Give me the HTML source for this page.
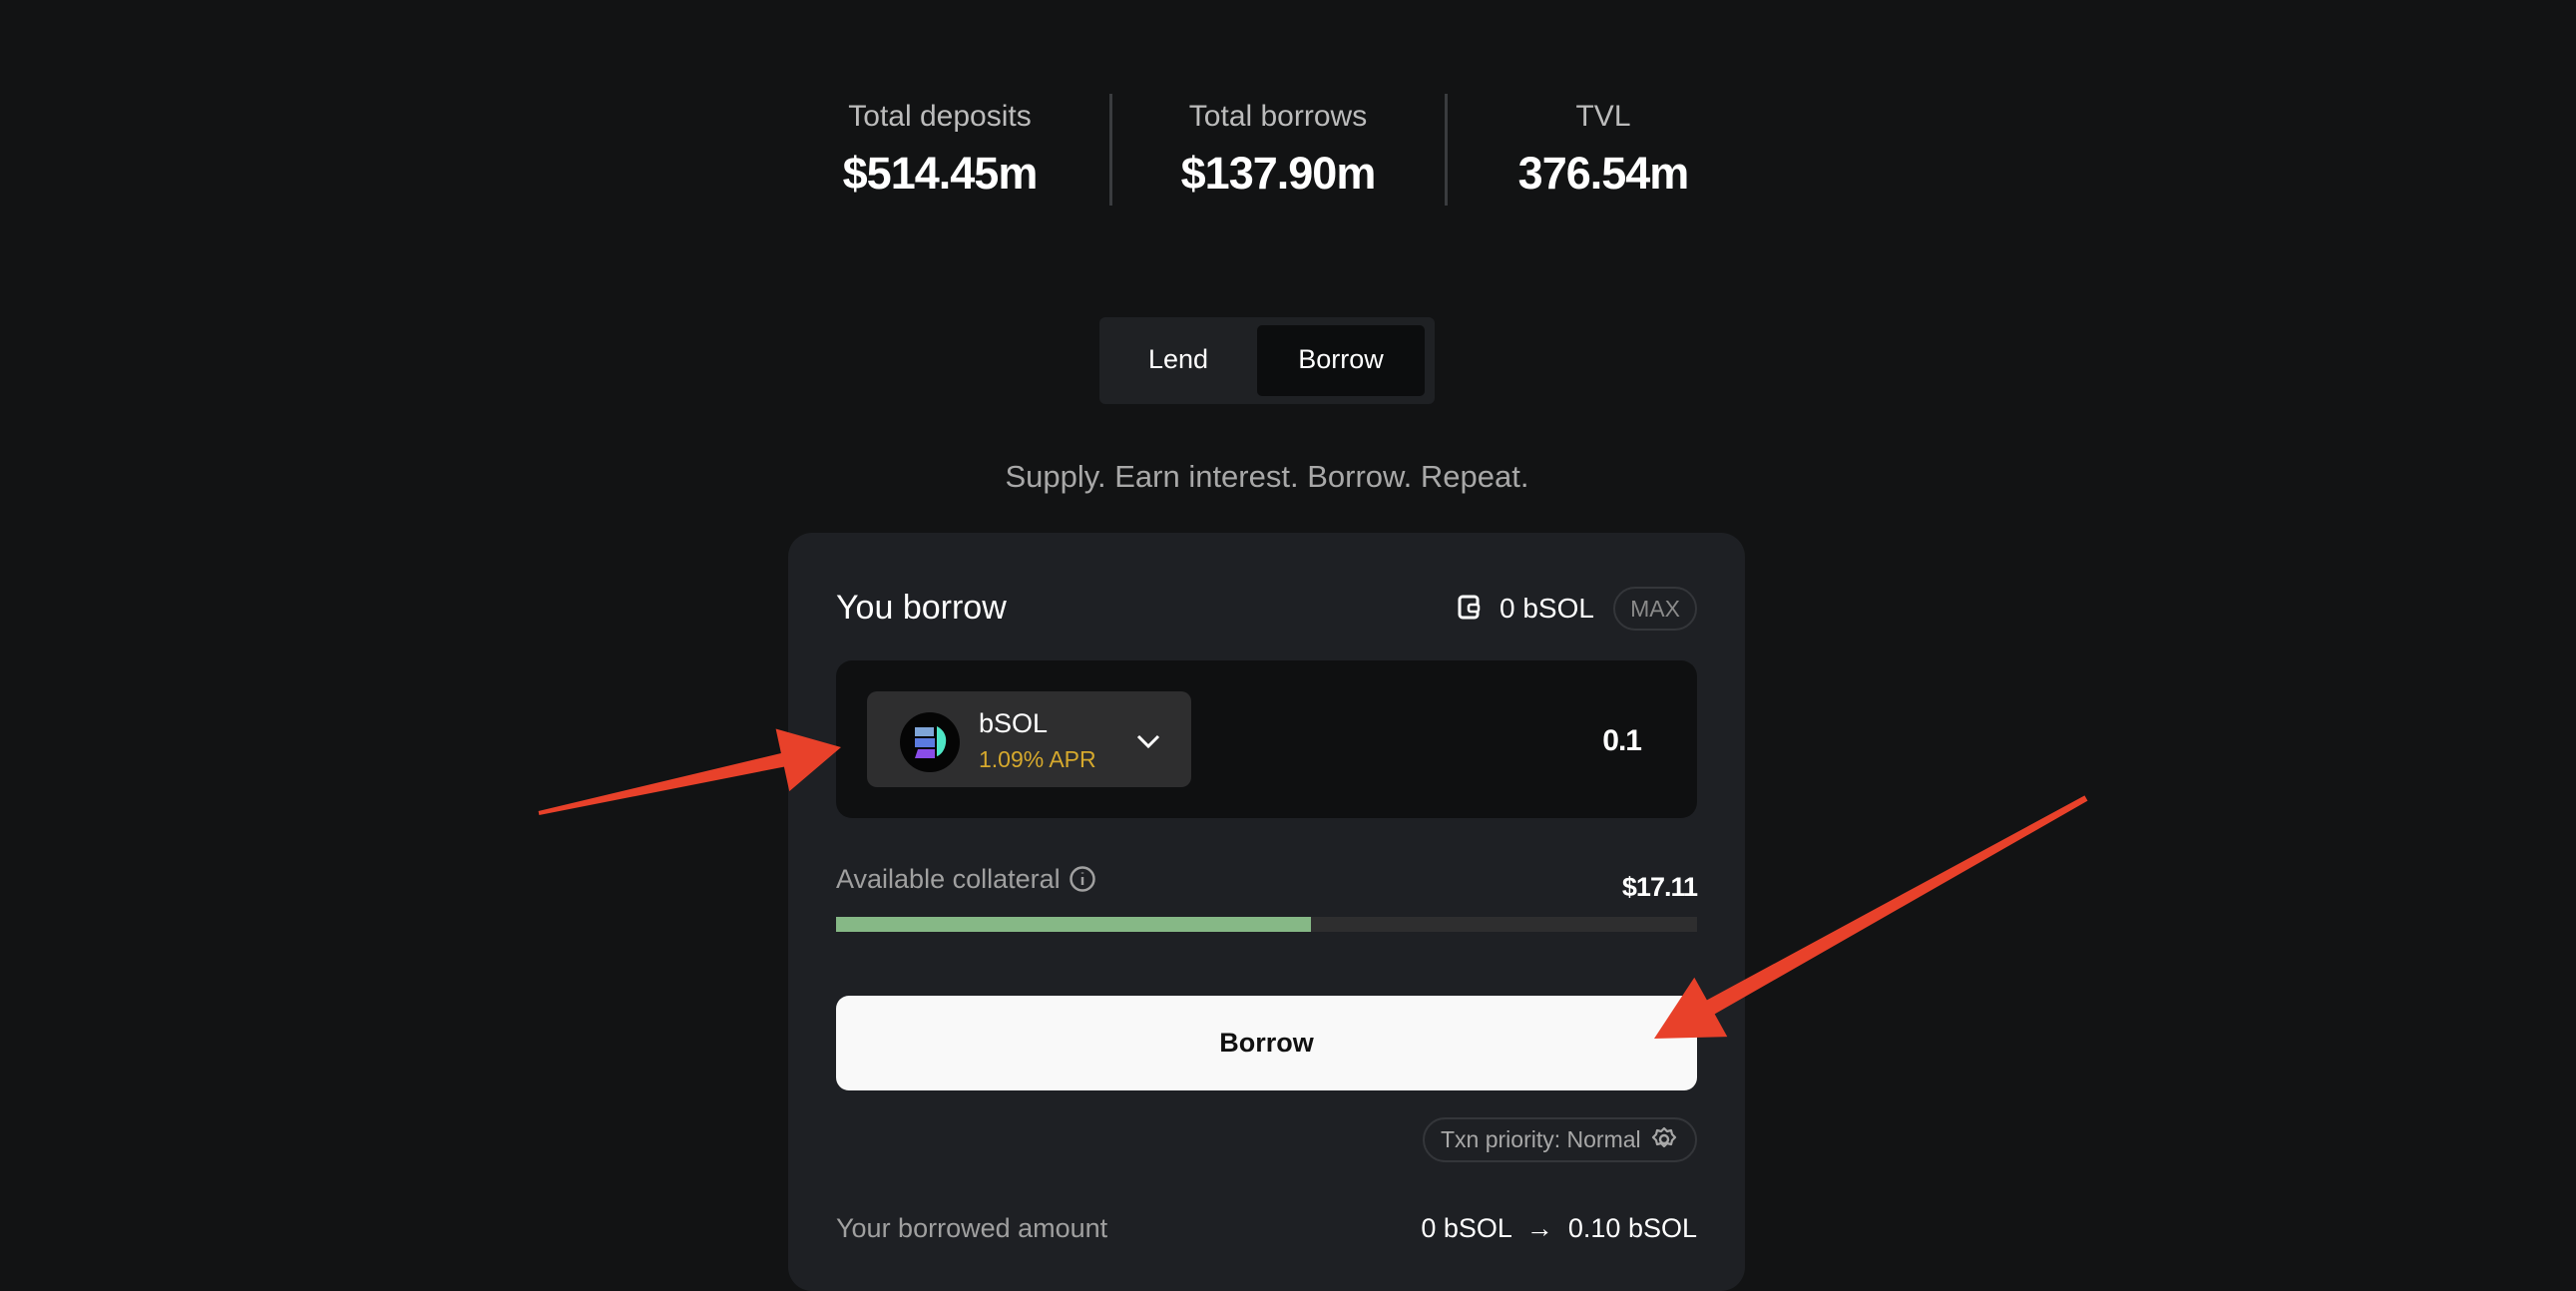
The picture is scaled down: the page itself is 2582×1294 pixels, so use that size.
<!DOCTYPE html>
<html><head><meta charset="utf-8"><style>
*{margin:0;padding:0;box-sizing:border-box}
body{width:2582px;height:1248px;background:#121314;font-family:"Liberation Sans",sans-serif;color:#fff;position:relative;overflow:hidden}
.a{position:absolute;white-space:nowrap}
.lbl{font-size:30px;color:#bcbcbc;transform:translateX(-50%)}
.val{font-size:45px;font-weight:700;transform:translateX(-50%);letter-spacing:-1px}
.div{position:absolute;width:3px;background:#3a3c3f;top:94px;height:112px}
</style></head><body>
<div class="a lbl" style="left:942px;top:100px">Total deposits</div>
<div class="a val" style="left:942px;top:148px">$514.45m</div>
<div class="div" style="left:1112px"></div>
<div class="a lbl" style="left:1281px;top:100px">Total borrows</div>
<div class="a val" style="left:1281px;top:148px">$137.90m</div>
<div class="div" style="left:1448px"></div>
<div class="a lbl" style="left:1607px;top:100px">TVL</div>
<div class="a val" style="left:1607px;top:148px">376.54m</div>

<div class="a" style="left:1102px;top:318px;width:336px;height:87px;background:#1f2124;border-radius:6px"></div>
<div class="a" style="left:1260px;top:326px;width:168px;height:71px;background:#0c0d0e;border-radius:5px"></div>
<div class="a" style="left:1181px;top:345px;font-size:27px;transform:translateX(-50%)">Lend</div>
<div class="a" style="left:1344px;top:345px;font-size:27px;transform:translateX(-50%)">Borrow</div>

<div class="a" style="left:1270px;top:460px;font-size:31px;color:#a8a8a8;transform:translateX(-50%)">Supply. Earn interest. Borrow. Repeat.</div>

<div class="a" style="left:790px;top:534px;width:959px;height:760px;background:#1e2024;border-radius:24px"></div>
<div class="a" style="left:838px;top:590px;font-size:34px">You borrow</div>
<svg class="a" style="left:1460px;top:594px" width="26" height="28" viewBox="0 0 26 28"><rect x="3" y="4" width="18" height="21" rx="3" fill="none" stroke="#fff" stroke-width="3"/><rect x="12" y="12" width="10" height="7" rx="2" fill="#1e2024" stroke="#fff" stroke-width="2.5"/></svg>
<div class="a" style="left:1503px;top:594px;font-size:28px">0 bSOL</div>
<div class="a" style="left:1617px;top:588px;width:84px;height:44px;border:2px solid #34363a;border-radius:22px;font-size:23px;color:#8a8a8a;text-align:center;line-height:40px">MAX</div>

<div class="a" style="left:838px;top:662px;width:863px;height:158px;background:#0f1011;border-radius:16px"></div>
<div class="a" style="left:869px;top:693px;width:325px;height:96px;background:#2e2e2f;border-radius:10px"></div>
<svg class="a" style="left:901px;top:713px" width="62" height="62" viewBox="0 0 62 62"><circle cx="31" cy="31" r="30" fill="#050505"/><path d="M16 16h19v9H16z" fill="#7fa5d8"/><path d="M16 27h20v9H16z" fill="#5b7be0"/><path d="M19 38h17v9H16z" fill="#8a4de8"/><path d="M38 15c8 4 10 11 9 17-1 7-5 12-9 13z" fill="#4ee6c6"/></svg>
<div class="a" style="left:981px;top:710px;font-size:27px">bSOL</div>
<div class="a" style="left:981px;top:748px;font-size:23px;color:#d6a92d">1.09% APR</div>
<svg class="a" style="left:1138px;top:734px" width="26" height="18" viewBox="0 0 26 18"><path d="M3 4l10 10 10-10" fill="none" stroke="#fff" stroke-width="3"/></svg>
<div class="a" style="left:1645px;top:726px;font-size:30px;font-weight:700;transform:translateX(-100%);letter-spacing:-1px">0.1</div>

<div class="a" style="left:838px;top:866px;font-size:27px;color:#a0a0a0">Available collateral</div>
<svg class="a" style="left:1071px;top:867px" width="28" height="28" viewBox="0 0 28 28"><circle cx="14" cy="14" r="11.5" fill="none" stroke="#a0a0a0" stroke-width="2.5"/><path d="M14 12v8M14 7.5v1" stroke="#a0a0a0" stroke-width="2.5"/></svg>
<div class="a" style="left:1701px;top:874px;font-size:27px;font-weight:700;transform:translateX(-100%);letter-spacing:-1px">$17.11</div>
<div class="a" style="left:838px;top:919px;width:863px;height:15px;background:#2e2e2f"></div>
<div class="a" style="left:838px;top:919px;width:476px;height:15px;background:#86b886"></div>

<div class="a" style="left:838px;top:998px;width:863px;height:95px;background:#f9f9f9;border-radius:13px;color:#111;font-size:27px;font-weight:700;text-align:center;line-height:95px">Borrow</div>

<div class="a" style="left:1426px;top:1120px;width:275px;height:45px;border:2px solid #34363a;border-radius:23px"></div>
<div class="a" style="left:1444px;top:1129px;font-size:23px;color:#a8a8a8">Txn priority: Normal</div>
<svg class="a" style="left:1654px;top:1128px" width="28" height="28" viewBox="0 0 28 28"><circle cx="14" cy="14" r="4" fill="none" stroke="#a8a8a8" stroke-width="2.4"/><path d="M14 3l3 3 4-1 1 4 3 3-3 3-1 4-4-1-3 3-3-3-4 1-1-4-3-3 3-3 1-4 4 1z" fill="none" stroke="#a8a8a8" stroke-width="2.2" stroke-linejoin="round"/></svg>

<div class="a" style="left:838px;top:1216px;font-size:27px;color:#a0a0a0">Your borrowed amount</div>
<div class="a" style="left:1701px;top:1216px;font-size:27px;transform:translateX(-100%)">0 bSOL &nbsp;→&nbsp; 0.10 bSOL</div>

<svg class="a" style="left:0;top:0" width="2582" height="1248">
<polygon fill="#e8412a" points="539.6,813 782.9,755 777.6,730.5 843,749 791.2,793.1 785.9,768.6 540.4,817"/>
<polygon fill="#e8412a" points="2089.5,797.4 1710.9,1002.4 1698.3,979.7 1658,1041 1731.3,1039.1 1718.7,1016.4 2092.5,802.6"/>
</svg>
</body></html>
